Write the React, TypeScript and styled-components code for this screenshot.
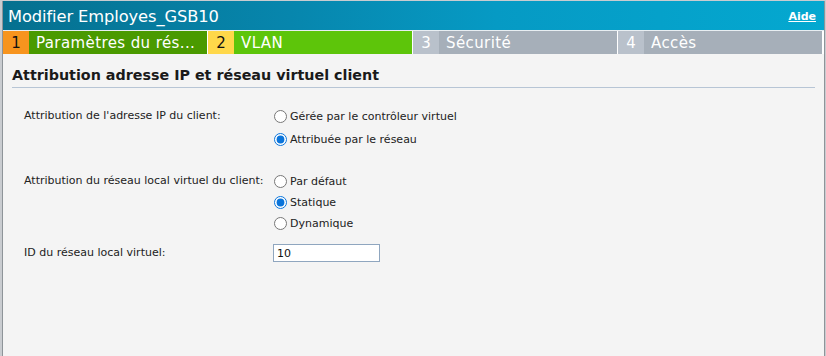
import React from "react";
import styled, { createGlobalStyle } from "styled-components";

const Global = createGlobalStyle`
  html, body { margin: 0; padding: 0; background: #dcdcdc; }
  body { font-family: "DejaVu Sans", Verdana, sans-serif; }
`;

const Page = styled.div`
  width: 826px;
  height: 356px;
  padding: 1px 1px 0 2px;
  box-sizing: border-box;
  background: #c9ccd0;
`;

const Dialog = styled.div`
  height: 100%;
  display: flex;
  flex-direction: column;
  background: #f4f4f4;
  border-right: 1px solid #8e9499;
  border-left: 1px solid #8e9499;
  box-sizing: border-box;
`;

const Header = styled.div`
  height: 30px;
  display: flex;
  align-items: center;
  justify-content: space-between;
  padding: 1px 8px 0 5px;
  box-sizing: border-box;
  background: linear-gradient(90deg, #05708f 0%, #0786ad 35%, #069ac4 60%, #04a8d0 100%);
  border-bottom: 1px solid #e8eef2;
`;

const Title = styled.div`
  color: #fff;
  font-size: 16.3px;
  letter-spacing: -0.1px;
`;

const Help = styled.a`
  color: #fff;
  font-size: 11px;
  font-weight: bold;
  text-decoration: underline;
  cursor: pointer;
`;

const Tabs = styled.div`
  display: flex;
  gap: 1px;
  padding: 0 2px 0 0;
  background: #ffffff;
`;

const Tab = styled.div`
  flex: 1;
  height: 23px;
  display: flex;
`;

const TabNum = styled.div<{ $bg: string; $fg: string }>`
  width: 26px;
  flex: none;
  display: flex;
  align-items: center;
  justify-content: center;
  background: ${(p) => p.$bg};
  color: ${(p) => p.$fg};
  font-size: 15px;
`;

const TabLabel = styled.div<{ $bg: string }>`
  flex: 1;
  display: flex;
  align-items: center;
  padding-left: 7px;
  background: ${(p) => p.$bg};
  color: #fff;
  font-size: 15px;
  letter-spacing: 0.4px;
  white-space: nowrap;
  overflow: hidden;
`;

const Body = styled.div`
  flex: 1;
  padding: 13px 9px 0 9px;
`;

const SectionTitle = styled.h2`
  margin: 0;
  padding: 0 0 4px 0;
  font-size: 14.3px;
  font-weight: bold;
  color: #1a1a1a;
  border-bottom: 1px solid #b7c5d5;
`;

const Form = styled.div`
  display: grid;
  grid-template-columns: 250px 1fr;
  padding: 18px 0 0 12px;
  font-size: 11px;
  color: #222;
`;

const Label = styled.div<{ $top: number }>`
  line-height: 20px;
  white-space: nowrap;
  margin-top: ${(p) => p.$top}px;
`;

const Options = styled.div<{ $gap: number; $top: number }>`
  display: flex;
  flex-direction: column;
  gap: ${(p) => p.$gap}px;
  margin-top: ${(p) => p.$top}px;
`;

const Option = styled.label`
  display: flex;
  align-items: center;
  height: 20px;
  gap: 3px;
  white-space: nowrap;
`;

const Radio = styled.input`
  width: 13px;
  height: 13px;
  margin: 0;
  accent-color: #0a74da;
`;

const FieldCell = styled.div<{ $top: number }>`
  margin-top: ${(p) => p.$top}px;
  margin-left: -1px;
  display: flex;
  align-items: center;
  height: 20px;
`;

const TextField = styled.input`
  width: 107px;
  height: 18px;
  box-sizing: border-box;
  margin: 0;
  padding: 0 3px;
  border: 1px solid #8fa6bf;
  background: #fff;
  font-family: inherit;
  font-size: 11px;
  color: #111;
  outline: none;
`;

const tabs = [
  { n: "1", label: "Paramètres du rés...", numBg: "#f7941e", numFg: "#111", bg: "#4a9a00" },
  { n: "2", label: "VLAN", numBg: "#ffd84a", numFg: "#111", bg: "#5dc50a" },
  { n: "3", label: "Sécurité", numBg: "#b9c1cb", numFg: "#fff", bg: "#a6afb9" },
  { n: "4", label: "Accès", numBg: "#b9c1cb", numFg: "#fff", bg: "#a6afb9" },
];

export default function App() {
  return (
    <>
      <Global />
      <Page>
        <Dialog>
          <Header>
            <Title>Modifier Employes_GSB10</Title>
            <Help>Aide</Help>
          </Header>
          <Tabs>
            {tabs.map((t) => (
              <Tab key={t.n}>
                <TabNum $bg={t.numBg} $fg={t.numFg}>{t.n}</TabNum>
                <TabLabel $bg={t.bg}>{t.label}</TabLabel>
              </Tab>
            ))}
          </Tabs>
          <Body>
            <SectionTitle>Attribution adresse IP et réseau virtuel client</SectionTitle>
            <Form>
              <Label $top={0}>Attribution de l'adresse IP du client:</Label>
              <Options $gap={3} $top={0}>
                <Option><Radio type="radio" name="ip" />Gérée par le contrôleur virtuel</Option>
                <Option><Radio type="radio" name="ip" defaultChecked />Attribuée par le réseau</Option>
              </Options>
              <Label $top={22}>Attribution du réseau local virtuel du client:</Label>
              <Options $gap={1} $top={22}>
                <Option><Radio type="radio" name="vlan" />Par défaut</Option>
                <Option><Radio type="radio" name="vlan" defaultChecked />Statique</Option>
                <Option><Radio type="radio" name="vlan" />Dynamique</Option>
              </Options>
              <Label $top={10}>ID du réseau local virtuel:</Label>
              <FieldCell $top={10}><TextField defaultValue="10" /></FieldCell>
            </Form>
          </Body>
        </Dialog>
      </Page>
    </>
  );
}
